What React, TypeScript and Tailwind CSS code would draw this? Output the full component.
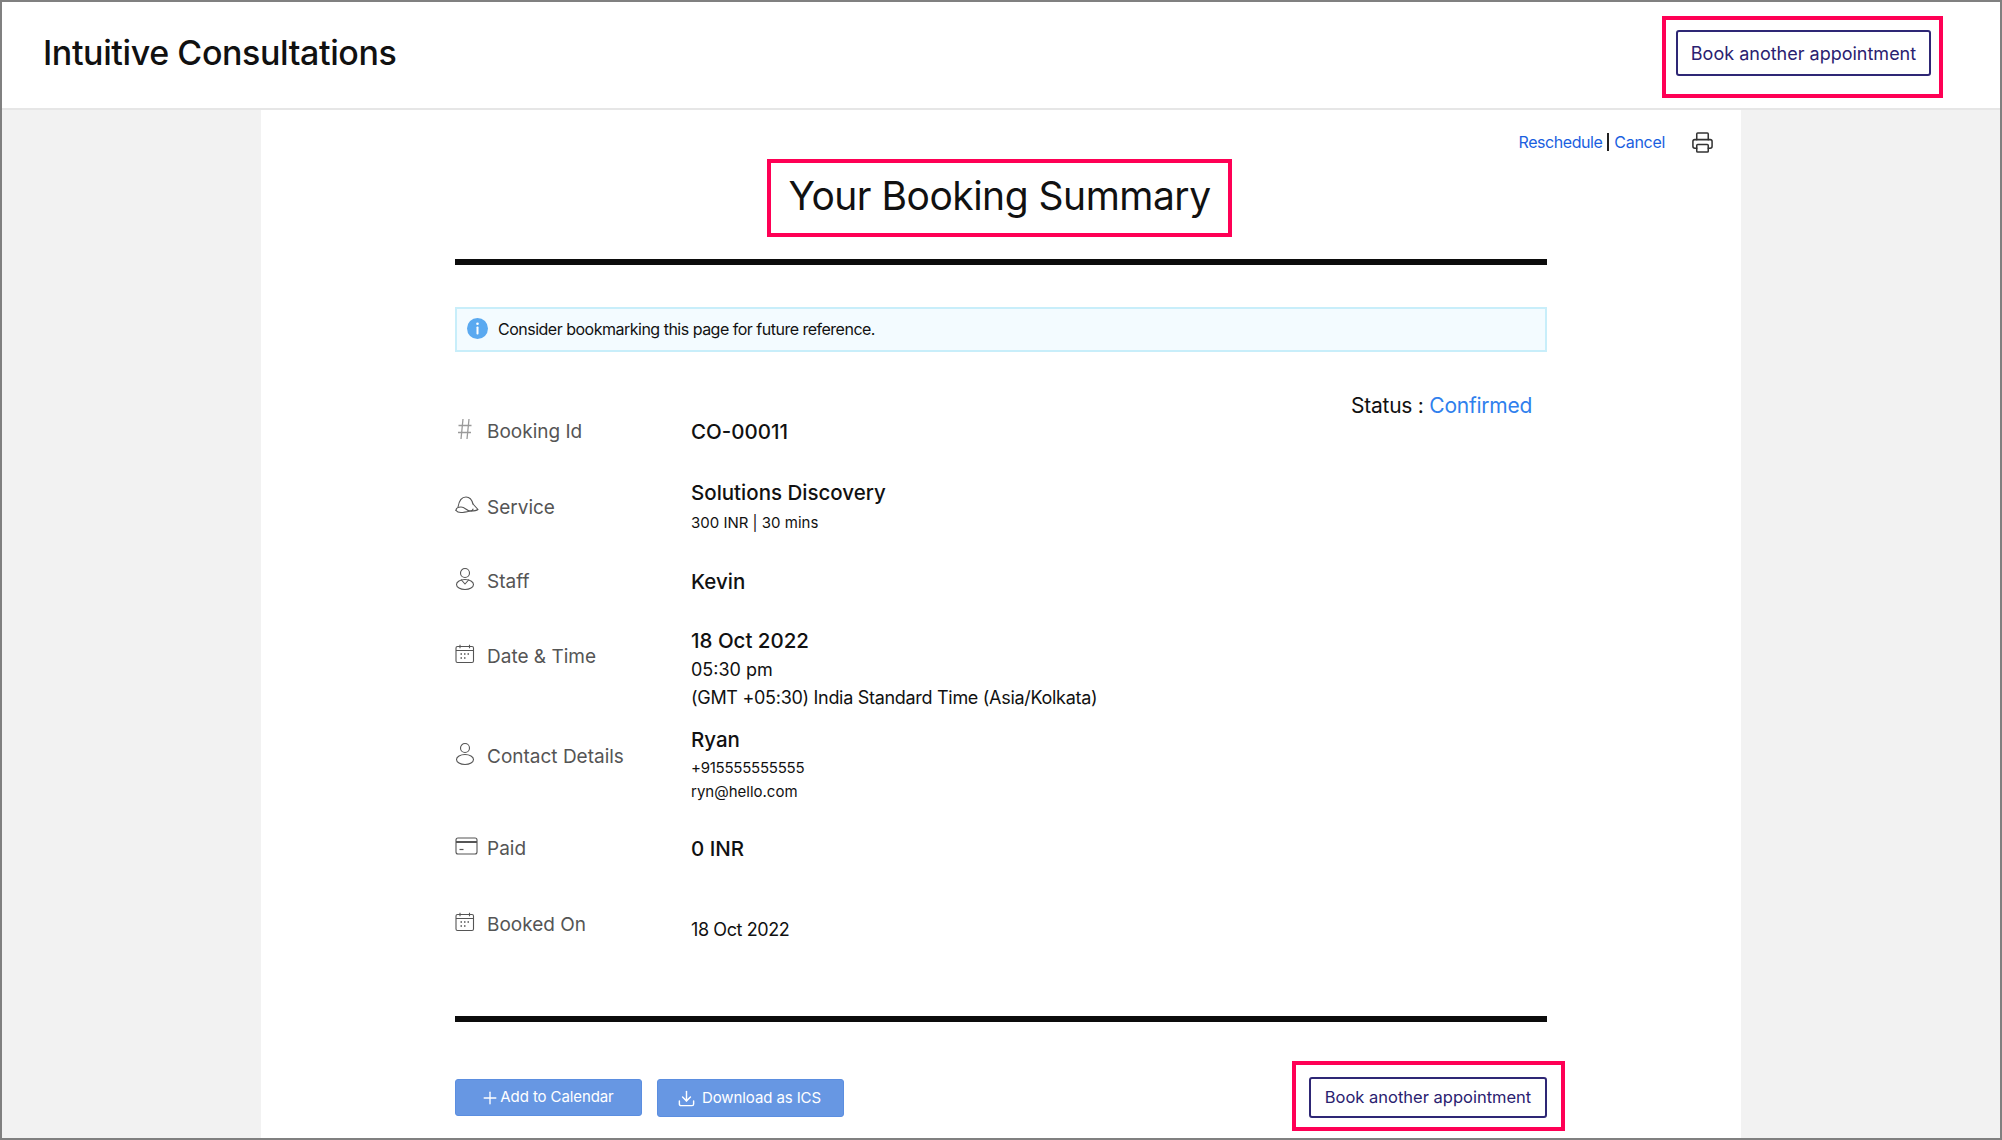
import type { ReactNode } from 'react';
import { Printer, Plus, Download } from 'lucide-react';

const HashIcon = () => (
  <svg width="16" height="24" viewBox="0 0 16 24" fill="none" stroke="#9a9a9a" strokeWidth="1.3" className="ml-[2px]">
    <path d="M6 2 4 22M12 2l-2 20M1.500 8.500h13M1 15.500h13" />
  </svg>
);

const CapIcon = () => (
  <svg width="24" height="20" viewBox="0 0 24 20" fill="none" stroke="#555" strokeWidth="1.1" strokeLinejoin="round" strokeLinecap="round">
    <path d="M3 12C4 6 7 2 11 2c3.500 0 6 3 7 7" />
    <path d="M1 15.500c0-2 2-3.500 5-3.500 4 0 6 4 9 4 2 0 3-1 3-2" />
    <path d="M1 15.500c1 1.500 3 2 5 2 3 0 5-.5 9-1.500M18 9l5 5.500c-2 1.500-5 1.500-7 1.500" />
  </svg>
);

const StaffIcon = () => (
  <svg width="20" height="24" viewBox="0 0 20 24" fill="none" stroke="#555" strokeWidth="1.1">
    <circle cx="10" cy="6" r="4.500" />
    <ellipse cx="10" cy="17.500" rx="8.500" ry="5" />
    <path d="M6 12.500 10 17l4-4.500" />
  </svg>
);

const CalendarIcon = () => (
  <svg width="20" height="20" viewBox="0 0 20 20" fill="none" stroke="#555" strokeWidth="1.1">
    <rect x="1" y="2.500" width="17.500" height="16" rx="1.500" />
    <path d="M1 6.500h17.500M5 .8v3.400M14.500 .8v3.400" />
    <path d="M5.500 10h1.500M9 10h1.500M12.500 10h1.500M5.500 14h1.500M9 14h1.500" strokeWidth="1.500" />
  </svg>
);

const PersonIcon = () => (
  <svg width="20" height="24" viewBox="0 0 20 24" fill="none" stroke="#555" strokeWidth="1.1">
    <circle cx="10" cy="6" r="4.500" />
    <ellipse cx="10" cy="17.500" rx="8.500" ry="5" />
  </svg>
);

const CardIcon = () => (
  <svg width="23" height="18" viewBox="0 0 23 18" fill="none" stroke="#555" strokeWidth="1.1">
    <rect x="1" y="1" width="21" height="16" rx="2" />
    <path d="M1 5h21" strokeWidth="2" />
    <path d="M4.500 12.500h4" strokeWidth="1.200" />
  </svg>
);

const InfoIcon = () => (
  <svg width="21" height="21" viewBox="0 0 21 21">
    <circle cx="10.500" cy="10.500" r="10.500" fill="#5aa9f0" />
    <circle cx="10.500" cy="5.800" r="1.300" fill="#fff" />
    <rect x="9.500" y="8.500" width="2" height="8" rx="0.800" fill="#fff" />
  </svg>
);

function Row({
  icon, label, labelClass, heightClass, children,
}: {
  icon: ReactNode;
  label: string;
  labelClass: string;
  heightClass: string;
  children: ReactNode;
}) {
  return (
    <div className={`flex items-start ${heightClass}`}>
      <div className={`flex w-[236px] shrink-0 items-center ${labelClass}`}>
        <span className="-mt-[5px] flex w-[32px] shrink-0 items-center">{icon}</span>
        <span className="pt-[1px] text-[19px] leading-[28px] text-[#555]">{label}</span>
      </div>
      <div className="text-[#111]">{children}</div>
    </div>
  );
}

const Title = ({ children }: { children: ReactNode }) => (
  <div className="pt-[1px] text-[20.500px] leading-[28px] font-medium">{children}</div>
);

export default function App() {
  return (
    <div className="box-border flex h-[1140px] flex-col overflow-hidden border-2 border-[#808080] bg-[#f2f2f2] font-['Inter',sans-serif]">
      <header className="flex h-[108px] shrink-0 items-start justify-between border-b-2 border-[#e6e6e6] bg-white pl-[41px] pr-[57px]">
        <h1 className="mt-[29px] text-[34px] leading-[44px] font-medium tracking-[-0.4px] text-[#111]">Intuitive Consultations</h1>
        <div className="mt-[14px] border-4 border-[#ff0055] pb-[18px] pl-[10px] pr-[8px] pt-[10px]">
          <button className="block h-[46px] w-[255px] rounded-[3px] border-2 border-[#2e2775] text-[18px] text-[#2a2170]">
            Book another appointment
          </button>
        </div>
      </header>

      <main className="mx-auto flex w-[1480px] flex-1 flex-col bg-white px-[194px] pt-[20px]">
        <div className="-mr-[167px] flex h-[24px] items-center justify-end">
          <a className="text-[16px] tracking-[-0.45px] text-[#1a5fe0]">Reschedule</a>
          <span className="mx-[5px] h-[18px] w-[2px] bg-[#222]" />
          <a className="text-[16px] tracking-[-0.3px] text-[#1a5fe0]">Cancel</a>
          <Printer className="ml-[26px] h-[23px] w-[23px] text-[#333]" strokeWidth={1.6} />
        </div>

        <div className="mt-[5px] flex justify-center">
          <h2 className="mr-[3px] box-border flex h-[78px] w-[465px] items-center justify-center border-4 border-[#ff0055] pb-[3px] text-[39px] tracking-[-0.5px] text-[#111]">
            Your Booking Summary
          </h2>
        </div>

        <div className="mt-[22px] h-[6px] bg-[#0c0c0c]" />

        <div className="mt-[42px] flex h-[45px] items-center gap-[10px] border-2 border-[#c8eefa] bg-[#f3fbff] pb-[2px] pl-[10px] text-[16px] tracking-[-0.5px] text-[#111]">
          <InfoIcon />
          Consider bookmarking this page for future reference.
        </div>

        <div className="mt-[40px] -mb-[3px] flex h-[28px] items-center justify-end pr-[15px] text-[21px] tracking-[-0.25px]">
          <span className="text-[#111]">Status :&nbsp;</span>
          <span className="text-[#2f80ed]">Confirmed</span>
        </div>

        <Row icon={<HashIcon />} label="Booking Id" labelClass="" heightClass="h-[61px]">
          <Title>CO-00011</Title>
        </Row>
        <Row icon={<CapIcon />} label="Service" labelClass="mt-[15px]" heightClass="h-[89px]">
          <Title>Solutions Discovery</Title>
          <div className="mt-[5px] text-[15px] leading-[22px]">300 INR | 30 mins</div>
        </Row>
        <Row icon={<StaffIcon />} label="Staff" labelClass="" heightClass="h-[59px]">
          <Title>Kevin</Title>
        </Row>
        <Row icon={<CalendarIcon />} label="Date & Time" labelClass="mt-[16px]" heightClass="h-[99px]">
          <Title>18 Oct 2022</Title>
          <div className="text-[18px] leading-[29px]">05:30 pm</div>
          <div className="text-[18px] leading-[28px] tracking-[-0.3px]">(GMT +05:30) India Standard Time (Asia/Kolkata)</div>
        </Row>
        <Row icon={<PersonIcon />} label="Contact Details" labelClass="mt-[17px]" heightClass="h-[109px]">
          <Title>Ryan</Title>
          <div className="mt-[2px] text-[15px] leading-[24px] tracking-[-0.25px]">+915555555555</div>
          <div className="text-[15px] leading-[24px]">ryn@hello.com</div>
        </Row>
        <Row icon={<CardIcon />} label="Paid" labelClass="" heightClass="h-[76px]">
          <Title>0 INR</Title>
        </Row>
        <Row icon={<CalendarIcon />} label="Booked On" labelClass="" heightClass="h-[106px]">
          <div className="mt-[6px] text-[18px] leading-[28px] tracking-[-0.4px]">18 Oct 2022</div>
        </Row>

        <div className="h-[6px] bg-[#0c0c0c]" />

        <div className="mt-[39px] flex items-start justify-between">
          <div className="mt-[18px] flex gap-[15px]">
            <button className="flex h-[37px] w-[187px] items-center justify-center rounded-[3px] border border-[#5b8ee0] bg-[#6797e3] pr-[3px] text-[15px] tracking-[-0.1px] text-white">
              <Plus className="h-[20px] w-[20px]" strokeWidth={1.6} />
              Add to Calendar
            </button>
            <button className="flex h-[38px] w-[187px] items-center justify-center gap-[6px] rounded-[3px] border border-[#5b8ee0] bg-[#6797e3] pr-[3px] text-[15px] tracking-[-0.1px] text-white">
              <Download className="h-[19px] w-[19px]" strokeWidth={1.8} />
              Download as ICS
            </button>
          </div>
          <div className="-mr-[18px] border-4 border-[#ff0055] pb-[9px] pl-[13px] pr-[14px] pt-[12px]">
            <button className="block h-[41px] w-[238px] rounded-[3px] border-2 border-[#2e2775] text-[16.500px] text-[#2a2170]">
              Book another appointment
            </button>
          </div>
        </div>
      </main>
    </div>
  );
}
